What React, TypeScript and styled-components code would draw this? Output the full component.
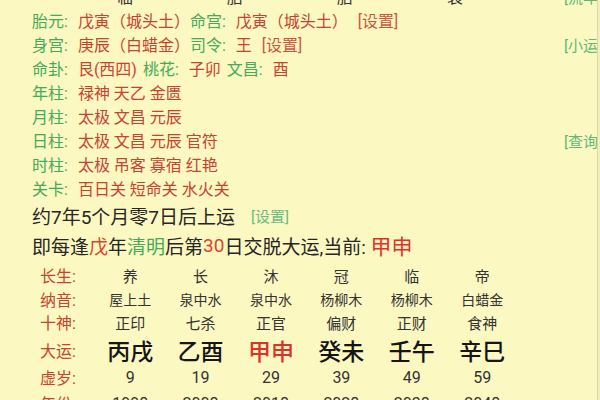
import React from "react";
import styled, { createGlobalStyle } from "styled-components";

const GlobalStyle = createGlobalStyle`
  html, body {
    margin: 0;
    padding: 0;
    background: #f3efbd;
  }
`;

const GREEN = "#45aa5b";
const RED = "#c8432f";
const INK = "#262626";

const Page = styled.div`
  width: 597px;
  height: 400px;
  overflow: hidden;
  background: #fcf8c2;
  border-right: 1px solid #dcd8a6;
  font-family: Roboto, "Noto Sans CJK SC", sans-serif;
  color: ${INK};
`;

const Sheet = styled.div`
  width: 602px;
  box-sizing: border-box;
  margin-top: -16px;
  padding-left: 32px;
`;

const TopRow = styled.div`
  display: flex;
  align-items: center;
  height: 24px;
  padding-left: 38px;
  font-size: 16px;
  white-space: nowrap;
`;

const PillarCell = styled.span`
  width: 110px;
  text-align: center;
  color: #333;
`;

const InfoLine = styled.div`
  display: flex;
  align-items: center;
  height: 24px;
  font-size: 16px;
  white-space: nowrap;
`;

const Seg = styled.span<{ $tone: "label" | "value" }>`
  color: ${(p) => (p.$tone === "label" ? GREEN : RED)};
  margin-right: ${(p) => (p.$tone === "label" ? "10px" : "0")};
`;

const Gap = styled.span`
  display: inline-block;
  width: 6px;
`;

const Setting = styled.span<{ $green?: boolean }>`
  color: ${(p) => (p.$green ? "#6bbd85" : "#d0543f")};
  font-size: ${(p) => (p.$green ? "15px" : "16px")};
  margin-left: ${(p) => (p.$green ? "16px" : "10px")};
`;

const SideLink = styled.span`
  margin-left: auto;
  color: #5fb879;
  font-size: 15px;
`;

const Notice = styled.div`
  display: flex;
  align-items: center;
  height: 30px;
  font-size: 19px;
  white-space: nowrap;
  color: ${INK};
`;

const Tint = styled.span<{ $c: string; $big?: boolean }>`
  color: ${(p) => p.$c};
  font-size: ${(p) => (p.$big ? "21px" : "inherit")};
`;

const Table = styled.div`
  margin-top: 3px;
  padding-left: 8px;
`;

const TRow = styled.div<{ $h: number }>`
  display: grid;
  grid-template-columns: 55px repeat(6, 70.4px);
  align-items: center;
  height: ${(p) => p.$h}px;
`;

const TLabel = styled.span`
  color: ${RED};
  font-size: 16px;
`;

const TCell = styled.span<{ $size: number; $bold?: boolean; $hot?: boolean }>`
  text-align: center;
  font-size: ${(p) => p.$size}px;
  font-weight: ${(p) => (p.$bold ? 500 : 400)};
  color: ${(p) => (p.$hot ? "#e0302a" : p.$bold ? "#151515" : "#333")};
`;

type Part = [string, string];

const infoRows: { parts: Part[]; setting?: boolean; link?: string }[] = [
  {
    parts: [["胎元:", "戊寅（城头土）"], ["命宫:", "戊寅（城头土）"]],
    setting: true,
  },
  {
    parts: [["身宫:", "庚辰（白蜡金）"], ["司令:", "王"]],
    setting: true,
    link: "[小运]",
  },
  { parts: [["命卦:", "艮(西四)"], ["桃花:", "子卯"], ["文昌:", "酉"]] },
  { parts: [["年柱:", "禄神 天乙 金匮"]] },
  { parts: [["月柱:", "太极 文昌 元辰"]] },
  { parts: [["日柱:", "太极 文昌 元辰 官符"]], link: "[查询]" },
  { parts: [["时柱:", "太极 吊客 寡宿 红艳"]] },
  { parts: [["关卡:", "百日关 短命关 水火关"]] },
];

const tableRows: { label: string; h: number; size: number; bold?: boolean; cells: string[] }[] = [
  { label: "长生:", h: 24, size: 15, cells: ["养", "长", "沐", "冠", "临", "帝"] },
  { label: "纳音:", h: 23, size: 14, cells: ["屋上土", "泉中水", "泉中水", "杨柳木", "杨柳木", "白蜡金"] },
  { label: "十神:", h: 23, size: 15, cells: ["正印", "七杀", "正官", "偏财", "正财", "食神"] },
  { label: "大运:", h: 30, size: 23, bold: true, cells: ["丙戌", "乙酉", "甲申", "癸未", "壬午", "辛巳"] },
  { label: "虚岁:", h: 28, size: 16, cells: ["9", "19", "29", "39", "49", "59"] },
  { label: "年份:", h: 24, size: 16, cells: ["1998", "2008", "2018", "2028", "2038", "2048"] },
];

export default function App() {
  return (
    <>
      <GlobalStyle />
      <Page>
        <Sheet>
          <TopRow>
            {["临", "胎", "胎", "衰"].map((c, i) => (
              <PillarCell key={i}>{c}</PillarCell>
            ))}
            <SideLink>[流年]</SideLink>
          </TopRow>

          {infoRows.map((row, i) => (
            <InfoLine key={i}>
              {row.parts.map(([label, value], j) => (
                <React.Fragment key={j}>
                  {j > 0 && !row.parts[j - 1][1].endsWith("）") && <Gap />}
                  <Seg $tone="label">{label}</Seg>
                  <Seg $tone="value">{value}</Seg>
                </React.Fragment>
              ))}
              {row.setting && <Setting>[设置]</Setting>}
              {row.link && <SideLink>{row.link}</SideLink>}
            </InfoLine>
          ))}

          <Notice>
            约7年5个月零7日后上运
            <Setting $green>[设置]</Setting>
          </Notice>
          <Notice>
            即每逢<Tint $c="#d9452f">戊</Tint>年<Tint $c={GREEN}>清明</Tint>后第
            <Tint $c="#d9452f">30</Tint>日交脱大运,当前:&nbsp;
            <Tint $c="#e0302a" $big>
              甲申
            </Tint>
          </Notice>

          <Table>
            {tableRows.map((row) => (
              <TRow key={row.label} $h={row.h}>
                <TLabel>{row.label}</TLabel>
                {row.cells.map((c, i) => (
                  <TCell key={i} $size={row.size} $bold={row.bold} $hot={row.bold && c === "甲申"}>
                    {c}
                  </TCell>
                ))}
              </TRow>
            ))}
          </Table>
        </Sheet>
      </Page>
    </>
  );
}
